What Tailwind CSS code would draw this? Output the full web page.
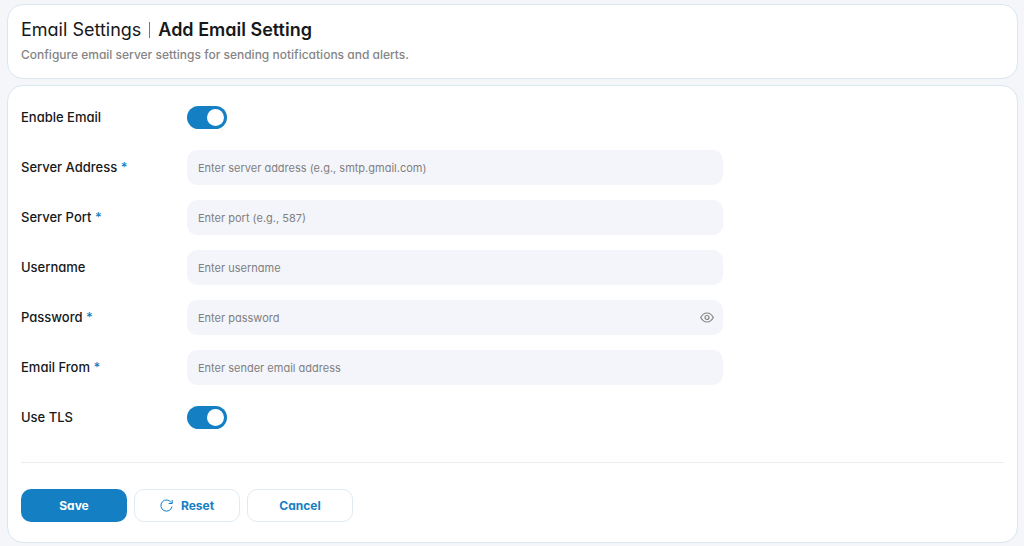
<!DOCTYPE html>
<html lang="en">
<head>
<meta charset="utf-8">
<meta name="viewport" content="width=device-width, initial-scale=1">
<title>Email Settings</title>
<script src="https://cdn.jsdelivr.net/npm/@tailwindcss/browser@4"></script>
</head>
<body class="min-h-screen bg-[#f4f6fa] pt-1 pr-1.5 pb-[3px] pl-[7px] font-['Inter',sans-serif] text-[#16181a] [font-feature-settings:'cv11']">
<div class="flex flex-col gap-1.5">
  <header class="rounded-2xl border border-[#d9e7f1] bg-white px-[13px] pt-3 pb-[13px]">
    <h1 class="flex items-center text-lg leading-[26px]">
      <span>Email Settings</span>
      <span class="mx-2 h-4 w-px bg-[#5b7f99]"></span>
      <span class="font-semibold">Add Email Setting</span>
    </h1>
    <p class="mt-0.5 text-xs leading-5 font-medium text-[#858585]">Configure email server settings for sending notifications and alerts.</p>
  </header>

  <main class="rounded-2xl border border-[#d9e7f1] bg-white px-[13px] pt-3.5 pb-5">
    <form>
      <div class="grid grid-cols-[166px_minmax(0,536px)] auto-rows-[35px] items-center gap-y-[15px] text-[13px] font-medium">
        <label for="enable">Enable Email</label>
        <input id="enable" type="checkbox" role="switch" checked class="h-[23px] w-10 appearance-none rounded-full bg-[#ccd3da] p-[3px] before:block before:size-[17px] before:rounded-full before:bg-white checked:bg-[#147fc3] checked:before:ml-[17px]">

        <label for="address">Server Address <span class="text-[#147fc3]">*</span></label>
        <input id="address" type="text" placeholder="Enter server address (e.g., smtp.gmail.com)" class="h-full w-full rounded-[10px] bg-[#f4f5fa] px-[11px] text-[11px] font-normal outline-none placeholder:text-[#808080]">

        <label for="port">Server Port <span class="text-[#147fc3]">*</span></label>
        <input id="port" type="text" inputmode="numeric" placeholder="Enter port (e.g., 587)" class="h-full w-full rounded-[10px] bg-[#f4f5fa] px-[11px] text-[11px] font-normal outline-none placeholder:text-[#808080]">

        <label for="username">Username</label>
        <input id="username" type="text" placeholder="Enter username" class="h-full w-full rounded-[10px] bg-[#f4f5fa] px-[11px] text-[11px] font-normal outline-none placeholder:text-[#808080]">

        <label for="password">Password <span class="text-[#147fc3]">*</span></label>
        <div class="flex h-full items-center rounded-[10px] bg-[#f4f5fa] pr-[9px]">
          <input id="password" type="password" placeholder="Enter password" class="h-full min-w-0 flex-1 px-[11px] text-[11px] font-normal outline-none placeholder:text-[#808080]">
          <button type="button" aria-label="Show password" class="text-[#858585]">
            <svg class="size-3.5" viewBox="0 0 14 14" fill="none" stroke="currentColor" stroke-width="1.2"><path d="M.7 6.500C2.300 3.500 4.300 2 7 2S11.700 3.500 13.300 6.500C11.700 9.500 9.700 11 7 11S2.300 9.500 .7 6.500Z"/><circle cx="7" cy="6.500" r="2"/></svg>
          </button>
        </div>

        <label for="from">Email From <span class="text-[#147fc3]">*</span></label>
        <input id="from" type="email" placeholder="Enter sender email address" class="h-full w-full rounded-[10px] bg-[#f4f5fa] px-[11px] text-[11px] font-normal outline-none placeholder:text-[#808080]">

        <label for="tls">Use TLS</label>
        <input id="tls" type="checkbox" role="switch" checked class="h-[23px] w-10 appearance-none rounded-full bg-[#ccd3da] p-[3px] before:block before:size-[17px] before:rounded-full before:bg-white checked:bg-[#147fc3] checked:before:ml-[17px]">
      </div>

      <div class="mt-[27px] flex gap-[7px] border-t border-[#e8edf0] pt-[26px] text-xs font-bold text-[#147fc3]">
        <button type="submit" class="h-[33px] w-[106px] rounded-[10px] bg-[#147fc3] text-white">Save</button>
        <button type="reset" class="flex h-[33px] w-[106px] items-center justify-center gap-2 rounded-[10px] border border-[#dfeaf3]">
          <svg class="size-[13px]" viewBox="0 0 13 13" fill="none" stroke="currentColor" stroke-width="1"><path d="M12 7.500A5.600 5.600 0 1 1 11.300 3.700L12 4.500M12.200 1V4.500H8.700"/></svg>
          Reset
        </button>
        <button type="button" class="h-[33px] w-[106px] rounded-[10px] border border-[#dfeaf3]">Cancel</button>
      </div>
    </form>
  </main>
</div>
</body>
</html>
